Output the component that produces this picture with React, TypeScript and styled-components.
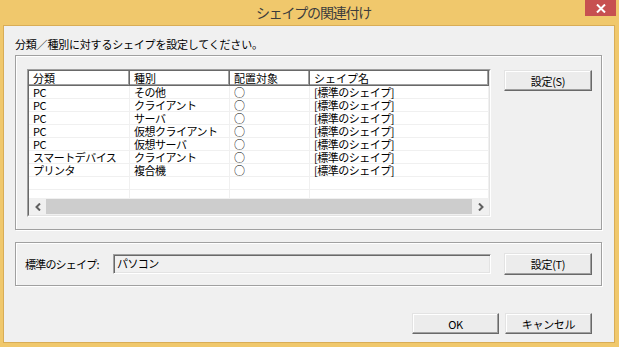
import React from "react";
import styled, { createGlobalStyle } from "styled-components";

const Global = createGlobalStyle`
  html, body { margin: 0; padding: 0; overflow: hidden; }
  body { font-family: "Noto Sans CJK JP", "Noto Sans", sans-serif; }
`;

const FONT = `"Noto Sans CJK JP", "Noto Sans", sans-serif`;

const Window = styled.div`
  width: 619px;
  height: 347px;
  background: #f0c86c;
  display: flex;
  flex-direction: column;
  box-sizing: border-box;
  font-family: ${FONT};
`;

const TitleBar = styled.div`
  height: 25px;
  display: grid;
  grid-template-columns: 1fr auto 1fr;
  align-items: start;
`;

const TitleText = styled.div`
  grid-column: 2;
  font-size: 14px;
  letter-spacing: -1.2px;
  line-height: 24px;
  color: #3c3c3c;
  margin-left: 8px;
`;

const CloseButton = styled.div`
  grid-column: 3;
  justify-self: end;
  margin-right: 3px;
  width: 31px;
  height: 16px;
  background: #c75050;
  display: flex;
  align-items: center;
  justify-content: center;
`;

const Client = styled.div`
  flex: 1;
  margin: 0 4px 4px 3px;
  background: #f0f0f0;
  border: 1px solid #d9ad56;
  padding: 11px 12px 0 11px;
  display: flex;
  flex-direction: column;
`;

const Instruction = styled.div`
  font-size: 11px;
  line-height: 14px;
  height: 14px;
  color: #000;
  letter-spacing: -0.2px;
`;

const GroupBox = styled.div<{ $top: number; $height: number }>`
  margin-top: ${(p) => p.$top}px;
  height: ${(p) => p.$height}px;
  box-sizing: border-box;
  border: 1px solid #a0a0a0;
  box-shadow: 1px 1px 0 #ffffff, inset 1px 1px 0 #ffffff;
`;

const ListGroup = styled(GroupBox)`
  display: flex;
  align-items: flex-start;
  padding: 13px 0 0 11px;
  gap: 13px;
`;

const ShapeGroup = styled(GroupBox)`
  display: grid;
  grid-template-columns: 88px 378px 88px;
  align-items: center;
  padding: 0 0 0 9px;
`;

const ListOuter = styled.div`
  width: 464px;
  height: 148px;
  box-sizing: border-box;
  border: 1px solid;
  border-color: #a0a0a0 #ffffff #ffffff #a0a0a0;
`;

const ListInner = styled.div`
  height: 100%;
  box-sizing: border-box;
  border: 1px solid;
  border-color: #696969 #e3e3e3 #e3e3e3 #696969;
  background: #ffffff;
  display: grid;
  grid-template-rows: 15px 1fr 17px;
  overflow: hidden;
`;

const COLS = "101px 100px 80px 179px";

const HeaderRow = styled.div`
  display: grid;
  grid-template-columns: ${COLS};
`;

const HeaderCell = styled.div`
  box-sizing: border-box;
  background: #ffffff;
  border-right: 1px solid #696969;
  border-bottom: 1px solid #696969;
  box-shadow: inset -1px -1px 0 #a0a0a0, inset 1px 1px 0 #ffffff;
  font-size: 11px;
  line-height: 14px;
  padding-left: 4px;
  color: #000;
  white-space: nowrap;
`;

const Rows = styled.div`
  overflow: hidden;
`;

const Row = styled.div`
  display: grid;
  grid-template-columns: ${COLS};
  height: 13px;
`;

const Cell = styled.div`
  box-sizing: border-box;
  height: 13px;
  border-right: 1px solid #f0f0f0;
  border-bottom: 1px solid #f0f0f0;
  font-size: 11px;
  line-height: 12px;
  padding-left: 4px;
  color: #000;
  white-space: nowrap;
  letter-spacing: -0.5px;
`;

const ScrollBar = styled.div`
  display: grid;
  grid-template-columns: 17px 1fr 17px;
  background: #f0f0f0;
`;

const ArrowBox = styled.div`
  display: flex;
  align-items: center;
  justify-content: center;
`;

const Thumb = styled.div`
  margin: 1px 0;
  background: #cdcdcd;
`;

const Button = styled.div<{ $w?: number; $h?: number }>`
  width: ${(p) => p.$w ?? 88}px;
  height: ${(p) => p.$h ?? 21}px;
  box-sizing: border-box;
  border: 1px solid;
  border-color: #e3e3e3 #696969 #696969 #e3e3e3;
  box-shadow: inset -1px -1px 0 #a0a0a0, inset 1px 1px 0 #ffffff;
  background: #ececec;
  display: flex;
  align-items: center;
  justify-content: center;
  font-size: 11px;
  color: #000;
  letter-spacing: -0.3px;
`;

const TopButton = styled(Button)`
  margin-top: 1px;
`;

const SideButton = styled(Button)`
  margin-left: 13px;
`;

const Label = styled.div`
  font-size: 11px;
  color: #000;
  letter-spacing: -0.8px;
  white-space: nowrap;
`;

const TextBox = styled.div`
  height: 20px;
  box-sizing: border-box;
  border: 1px solid;
  border-color: #a0a0a0 #ffffff #ffffff #a0a0a0;
  box-shadow: inset 1px 1px 0 #696969, inset -1px -1px 0 #e3e3e3;
  background: #f0f0f0;
  font-size: 11px;
  line-height: 17px;
  padding-left: 3px;
  color: #000;
  letter-spacing: -0.6px;
`;

const Footer = styled.div`
  margin-top: 27px;
  display: flex;
  justify-content: flex-end;
  gap: 6px;
  padding-right: 10px;
`;

const rows = [
  ["PC", "その他"],
  ["PC", "クライアント"],
  ["PC", "サーバ"],
  ["PC", "仮想クライアント"],
  ["PC", "仮想サーバ"],
  ["スマートデバイス", "クライアント"],
  ["プリンタ", "複合機"],
];

const Chevron = ({ dir }: { dir: "left" | "right" }) => (
  <svg width="6" height="8" viewBox="0 0 6 8">
    <polyline
      points={dir === "left" ? "5,0.5 1.5,4 5,7.5" : "1,0.5 4.5,4 1,7.5"}
      fill="none"
      stroke="#606060"
      strokeWidth="2"
    />
  </svg>
);

export default function App() {
  return (
    <>
      <Global />
      <Window>
        <TitleBar>
          <TitleText>シェイプの関連付け</TitleText>
          <CloseButton>
            <svg width="10" height="9" viewBox="0 0 10 9">
              <path d="M1 0.5 L9 8.5 M9 0.5 L1 8.5" stroke="#fff" strokeWidth="2" />
            </svg>
          </CloseButton>
        </TitleBar>
        <Client>
          <Instruction>分類／種別に対するシェイプを設定してください。</Instruction>
          <ListGroup $top={4} $height={175}>
            <ListOuter>
              <ListInner>
                <HeaderRow>
                  <HeaderCell>分類</HeaderCell>
                  <HeaderCell>種別</HeaderCell>
                  <HeaderCell>配置対象</HeaderCell>
                  <HeaderCell>シェイプ名</HeaderCell>
                </HeaderRow>
                <Rows>
                  {rows.map(([a, b], i) => (
                    <Row key={i}>
                      <Cell>{a}</Cell>
                      <Cell>{b}</Cell>
                      <Cell>○</Cell>
                      <Cell>[標準のシェイプ]</Cell>
                    </Row>
                  ))}
                  {[0, 1, 2].map((i) => (
                    <Row key={"e" + i}>
                      <Cell />
                      <Cell />
                      <Cell />
                      <Cell />
                    </Row>
                  ))}
                </Rows>
                <ScrollBar>
                  <ArrowBox>
                    <Chevron dir="left" />
                  </ArrowBox>
                  <Thumb />
                  <ArrowBox>
                    <Chevron dir="right" />
                  </ArrowBox>
                </ScrollBar>
              </ListInner>
            </ListOuter>
            <TopButton>設定(S)</TopButton>
          </ListGroup>
          <ShapeGroup $top={12} $height={44}>
            <Label>標準のシェイプ:</Label>
            <TextBox>パソコン</TextBox>
            <SideButton $h={22}>設定(T)</SideButton>
          </ShapeGroup>
          <Footer>
            <Button $w={87}>OK</Button>
            <Button $w={87}>キャンセル</Button>
          </Footer>
        </Client>
      </Window>
    </>
  );
}
